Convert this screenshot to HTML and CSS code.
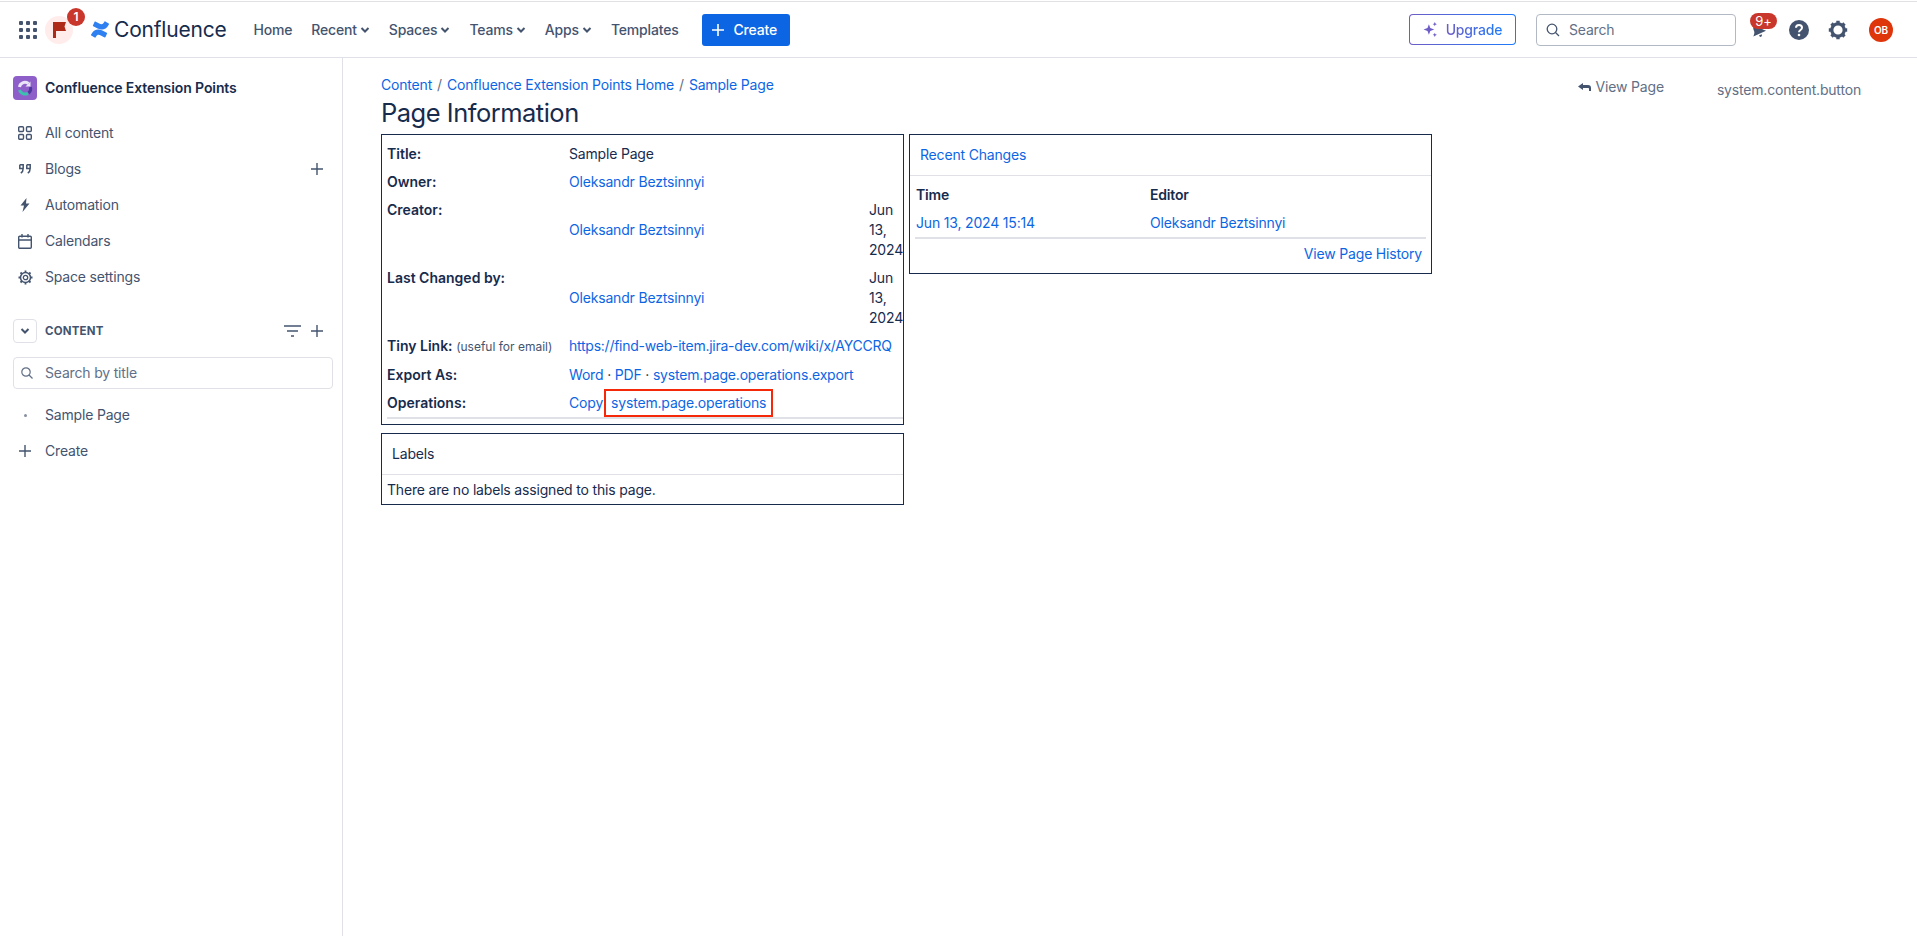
FILE: index.html
```html
<!DOCTYPE html>
<html>

<head>
    <meta charset="UTF-8">
    <link rel="stylesheet" href="styles.css">
    <title>Page Information</title>
</head>

<body>
    <div class="topBar">
        <svg class="waffle" width="18" height="18" viewBox="0 0 18 18" fill="#44546f">
            <rect x="0" y="0" width="4" height="4" rx="1" />
            <rect x="7" y="0" width="4" height="4" rx="1" />
            <rect x="14" y="0" width="4" height="4" rx="1" />
            <rect x="0" y="7" width="4" height="4" rx="1" />
            <rect x="7" y="7" width="4" height="4" rx="1" />
            <rect x="14" y="7" width="4" height="4" rx="1" />
            <rect x="0" y="14" width="4" height="4" rx="1" />
            <rect x="7" y="14" width="4" height="4" rx="1" />
            <rect x="14" y="14" width="4" height="4" rx="1" />
        </svg>
        <div class="flagWrapper">
            <svg width="13" height="16" viewBox="0 0 13 16">
                <path d="M0 0h13l-1.500 4.500L13 9H3v7H0z" fill="#ae2a19" />
            </svg>
            <div class="flagBadge">1</div>
        </div>
        <div class="logo">
            <svg width="18" height="17" viewBox="0 0 18 17" fill="#2f80f0">
                <path d="M.6 12.700c-.2.300-.4.700-.6 1-.1.300 0 .600.300.800l3.400 2.100c.3.200.600.100.800-.2.100-.2.300-.5.600-.9 1.300-2.200 2.700-1.900 5.200-.7l3.400 1.600c.3.100.6 0 .8-.3l1.600-3.700c.1-.3 0-.6-.3-.7-.7-.3-2.200-1-3.500-1.700C7.600 7.600 3.400 7.800.6 12.700z" />
                <path d="M17.400 4.300c.2-.3.400-.7.600-1 .1-.3 0-.6-.3-.8L14.300.4c-.3-.2-.6-.1-.8.2-.1.200-.3.500-.6.900-1.300 2.200-2.700 1.900-5.200.7L4.300.6c-.3-.1-.6 0-.8.300L1.900 4.600c-.1.300 0 .6.300.7.700.3 2.200 1 3.500 1.700 4.700 2.400 8.900 2.200 11.700-2.700z" />
            </svg>
            <span>Confluence</span>
        </div>
        <div class="navItem">Home</div>
        <div class="navItem">Recent<svg class="chevron" width="10" height="6" viewBox="0 0 10 6"><path d="M1.500 1L5 4.500 8.500 1" /></svg></div>
        <div class="navItem">Spaces<svg class="chevron" width="10" height="6" viewBox="0 0 10 6"><path d="M1.500 1L5 4.500 8.500 1" /></svg></div>
        <div class="navItem">Teams<svg class="chevron" width="10" height="6" viewBox="0 0 10 6"><path d="M1.500 1L5 4.500 8.500 1" /></svg></div>
        <div class="navItem">Apps<svg class="chevron" width="10" height="6" viewBox="0 0 10 6"><path d="M1.500 1L5 4.500 8.500 1" /></svg></div>
        <div class="navItem">Templates</div>
        <div class="createButton">
            <svg width="12" height="12" viewBox="0 0 12 12">
                <path d="M6 0v12M0 6h12" stroke="white" stroke-width="1.600" />
            </svg>
            <span>Create</span>
        </div>

        <div class="upgradeButton">
            <svg width="15" height="15" viewBox="0 0 14 14" fill="#6e5dc6">
                <path d="M5.500 2l1.300 3.700L10.500 7 6.800 8.300 5.500 12 4.200 8.300.5 7l3.700-1.300z" />
                <path d="M11 0l.6 1.400L13 2l-1.400.6L11 4l-.6-1.400L9 2l1.400-.6zM11 10l.6 1.400 1.400.6-1.400.6L11 14l-.6-1.400L9 12l1.400-.6z" />
            </svg>
            <span>Upgrade</span>
        </div>
        <div class="searchBox">
            <svg width="14" height="14" viewBox="0 0 14 14" fill="none" stroke="#44546f" stroke-width="1.300">
                <circle cx="6" cy="6" r="4.800" />
                <path d="M9.500 9.500L13 13" />
            </svg>
            <span>Search</span>
        </div>
        <div class="bellWrapper">
            <svg width="18" height="18" viewBox="0 0 18 18" fill="#44546f">
                <g transform="rotate(-25 9 9)">
                    <path d="M9 3c3 0 4 2.500 4 5 0 2 1 3 3 5H2c2-2 3-3 3-5 0-2.500 1-5 4-5zM7.500 14.500h3c0 1-.7 2-1.500 2s-1.500-1-1.500-2z" />
                </g>
            </svg>
            <div class="bellBadge">9+</div>
        </div>
        <svg class="helpIcon" width="20" height="20" viewBox="0 0 20 20">
            <circle cx="10" cy="10" r="10" fill="#44546f" />
            <path d="M7 7.800C7 6 8.300 5 10 5s3 1.100 3 2.700c0 2.300-3 2.300-3 4.500" fill="none" stroke="white" stroke-width="2" />
            <circle cx="10" cy="15" r="1.300" fill="white" />
        </svg>
        <svg class="gearIcon" width="20" height="20" viewBox="0 0 20 20">
            <circle cx="10" cy="10" r="6.200" fill="none" stroke="#44546f" stroke-width="3.200" />
            <path d="M10 .8v3M10 16.200v3M.8 10h3M16.200 10h3M3.500 3.500l2.100 2.100M14.400 14.400l2.100 2.100M3.500 16.500l2.100-2.100M14.400 5.600l2.100-2.100" stroke="#44546f" stroke-width="3.400" />
        </svg>
        <div class="avatar">OB</div>
    </div>

    <div class="wrapper">
        <div class="sidebar">
            <div class="spaceTitle">
                <svg width="24" height="24" viewBox="0 0 24 24">
                    <rect width="24" height="24" rx="4" fill="#8f5fc9" />
                    <path d="M6.500 14c1 3.500 5 5 8.500 3.500" fill="none" stroke="#3cc0b0" stroke-width="3" />
                    <path d="M6.500 11c.5-4 5-6 9-3.500" fill="none" stroke="#e9e4f7" stroke-width="3" />
                    <path d="M15.500 17c2-1.500 2.500-4 2-6" fill="none" stroke="#4b3a9c" stroke-width="3" />
                    <path d="M17.500 5.500v5h-5z" fill="#e9e4f7" />
                </svg>
                <span>Confluence Extension Points</span>
            </div>
            <div class="sideItem">
                <div class="sideIcon">
                    <svg width="14" height="14" viewBox="0 0 14 14" fill="none" stroke="#44546f" stroke-width="1.400">
                        <rect x=".7" y=".7" width="4.800" height="4.800" rx="1" />
                        <rect x="8.500" y=".7" width="4.800" height="4.800" rx="1" />
                        <rect x=".7" y="8.500" width="4.800" height="4.800" rx="1" />
                        <rect x="8.500" y="8.500" width="4.800" height="4.800" rx="1" />
                    </svg>
                </div>
                <span>All content</span>
            </div>
            <div class="sideItem">
                <div class="sideIcon">
                    <svg width="12" height="10" viewBox="0 0 12 10" fill="none" stroke="#44546f" stroke-width="1.500">
                        <path d="M.8 .8h3.400v3.400c0 2.400-.8 3.900-2.400 5M.8 .8v3.700h3.400M7.800 .8h3.400v3.400c0 2.400-.8 3.900-2.400 5M7.800 .8v3.700h3.400" />
                    </svg>
                </div>
                <span>Blogs</span>
                <svg class="sidePlus" width="12" height="12" viewBox="0 0 12 12">
                    <path d="M6 0v12M0 6h12" stroke="#44546f" stroke-width="1.400" />
                </svg>
            </div>
            <div class="sideItem">
                <div class="sideIcon">
                    <svg width="10" height="14" viewBox="0 0 10 14" fill="#44546f">
                        <path d="M6.500 0L.5 7.500H4L2.500 14 9.500 5.500H6z" />
                    </svg>
                </div>
                <span>Automation</span>
            </div>
            <div class="sideItem">
                <div class="sideIcon">
                    <svg width="14" height="15" viewBox="0 0 14 15" fill="none" stroke="#44546f" stroke-width="1.400">
                        <rect x=".7" y="2.200" width="12.600" height="12" rx="1" />
                        <path d="M.7 6h12.600M4 0v3.500M10 0v3.500" />
                    </svg>
                </div>
                <span>Calendars</span>
            </div>
            <div class="sideItem">
                <div class="sideIcon">
                    <svg width="15" height="15" viewBox="0 0 15 15" fill="none" stroke="#44546f">
                        <circle cx="7.500" cy="7.500" r="2.200" stroke-width="1.300" />
                        <circle cx="7.500" cy="7.500" r="5" stroke-width="1.500" />
                        <path d="M7.500 .5v2M7.500 12.500v2M.5 7.500h2M12.500 7.500h2M2.500 2.500L4 4M11 11l1.500 1.500M2.500 12.500L4 11M11 4l1.500-1.500" stroke-width="1.800" />
                    </svg>
                </div>
                <span>Space settings</span>
            </div>

            <div class="contentHeader">
                <div class="collapseButton">
                    <svg class="chevron" width="10" height="6" viewBox="0 0 10 6"><path d="M1.500 1L5 4.500 8.500 1" /></svg>
                </div>
                <span class="contentTitle">CONTENT</span>
                <svg class="filterIcon" width="17" height="12" viewBox="0 0 17 12" stroke="#44546f" stroke-width="1.400">
                    <path d="M0 1h17M3 6h11M7 11h3" />
                </svg>
                <svg class="contentPlus" width="12" height="12" viewBox="0 0 12 12">
                    <path d="M6 0v12M0 6h12" stroke="#44546f" stroke-width="1.400" />
                </svg>
            </div>
            <div class="titleSearch">
                <svg width="12" height="12" viewBox="0 0 12 12" fill="none" stroke="#626f86" stroke-width="1.200">
                    <circle cx="5" cy="5" r="4.200" />
                    <path d="M8 8l3.500 3.500" />
                </svg>
                <span>Search by title</span>
            </div>
            <div class="sideItem">
                <div class="sideIcon"><div class="dot"></div></div>
                <span>Sample Page</span>
            </div>
            <div class="sideItem">
                <div class="sideIcon">
                    <svg width="12" height="12" viewBox="0 0 12 12">
                        <path d="M6 0v12M0 6h12" stroke="#44546f" stroke-width="1.400" />
                    </svg>
                </div>
                <span>Create</span>
            </div>
        </div>

        <div class="main">
            <div class="pageHeader">
                <div>
                    <div class="breadcrumbs">
                        <a>Content</a><span>/</span><a>Confluence Extension Points Home</a><span>/</span><a>Sample Page</a>
                    </div>
                    <h1>Page Information</h1>
                </div>
                <div class="viewPage">
                    <svg width="13" height="9" viewBox="0 0 13 9" fill="#44546f">
                        <path d="M0 3.500L5 0v2h5c2 0 3 1 3 3v3h-2V6c0-.7-.3-1-1-1H5v2z" />
                    </svg>
                    <span>View Page</span>
                </div>
                <div class="contentButton">system.content.button</div>
            </div>

            <div class="columns">
                <div class="leftColumn">
                    <div class="box">
                        <table class="infoTable">
                            <colgroup>
                                <col class="labelCol">
                                <col class="valueCol">
                                <col class="dateCol">
                            </colgroup>
                            <tr>
                                <td class="label">Title:</td>
                                <td colspan="2">Sample Page</td>
                            </tr>
                            <tr>
                                <td class="label">Owner:</td>
                                <td colspan="2"><a>Oleksandr Beztsinnyi</a></td>
                            </tr>
                            <tr>
                                <td class="label">Creator:</td>
                                <td class="middle"><a>Oleksandr Beztsinnyi</a></td>
                                <td class="date">Jun 13, 2024</td>
                            </tr>
                            <tr>
                                <td class="label">Last Changed by:</td>
                                <td class="middle"><a>Oleksandr Beztsinnyi</a></td>
                                <td class="date">Jun 13, 2024</td>
                            </tr>
                            <tr>
                                <td class="label">Tiny Link: <small>(useful for email)</small></td>
                                <td colspan="2"><a class="tinyUrl">https://find-web-item.jira-dev.com/wiki/x/AYCCRQ</a></td>
                            </tr>
                            <tr>
                                <td class="label">Export As:</td>
                                <td colspan="2"><a>Word</a> · <a>PDF</a> · <a>system.page.operations.export</a></td>
                            </tr>
                            <tr>
                                <td class="label">Operations:</td>
                                <td colspan="2"><a>Copy</a><a class="highlighted">system.page.operations</a></td>
                            </tr>
                        </table>
                        <div class="infoEnd"></div>
                    </div>
                    <div class="box labelsBox">
                        <div class="boxTitle">Labels</div>
                        <div class="noLabels">There are no labels assigned to this page.</div>
                    </div>
                </div>
                <div class="box rightBox">
                    <div class="boxTitle"><a>Recent Changes</a></div>
                    <table class="changesTable">
                        <colgroup>
                            <col class="timeCol">
                            <col>
                        </colgroup>
                        <tr>
                            <th>Time</th>
                            <th>Editor</th>
                        </tr>
                        <tr>
                            <td><a>Jun 13, 2024 15:14</a></td>
                            <td><a>Oleksandr Beztsinnyi</a></td>
                        </tr>
                    </table>
                    <div class="historyLink"><a>View Page History</a></div>
                </div>
            </div>
        </div>
    </div>
</body>

</html>
```
FILE: styles.css
```css
html,
body {
    margin: 0;
    height: 100%;
}

body {
    font-family: Inter, "Liberation Sans", sans-serif;
    font-size: 14px;
    line-height: 20px;
    letter-spacing: -0.18px;
    color: #172b4d;
    background: white;
    overflow: hidden;
}

a {
    color: #0c66e4;
}

.topBar {
    height: 55px;
    margin-top: 1px;
    border-top: solid 1px #e0e1e4;
    border-bottom: solid 1px #dfe1e6;
    display: flex;
    align-items: center;
    padding: 0 24px 0 19px;
}

.waffle {
    flex: none;
}

.flagWrapper {
    position: relative;
    width: 28px;
    height: 28px;
    margin-left: 8px;
    border-radius: 50%;
    background: #ffeceb;
    display: flex;
    align-items: center;
    justify-content: center;
}

.flagBadge {
    position: absolute;
    top: -8px;
    right: -12px;
    width: 18px;
    height: 18px;
    border-radius: 50%;
    background: #c9372c;
    color: white;
    font-size: 12px;
    line-height: 18px;
    font-weight: 600;
    text-align: center;
}

.logo {
    display: flex;
    align-items: center;
    gap: 5px;
    margin-left: 18px;
    margin-right: 27px;
    font-size: 21px;
    letter-spacing: -0.2px;
    color: #172b4d;
}

.navItem {
    display: flex;
    align-items: center;
    gap: 3px;
    color: #44546f;
    font-weight: 500;
    font-size: 14px;
    margin-right: 19px;
}

.chevron {
    fill: none;
    stroke: #44546f;
    stroke-width: 2;
}

.createButton {
    display: flex;
    align-items: center;
    gap: 10px;
    width: 88px;
    height: 32px;
    box-sizing: border-box;
    padding-left: 10px;
    margin-left: 4px;
    background: #0c66e4;
    color: white;
    font-weight: 500;
    border-radius: 3px;
}

.upgradeButton {
    display: flex;
    align-items: center;
    justify-content: center;
    gap: 8px;
    width: 107px;
    height: 31px;
    box-sizing: border-box;
    margin-left: auto;
    border: solid 1px transparent;
    border-radius: 4px;
    background: linear-gradient(white, white) padding-box, linear-gradient(90deg, #6e5dc6, #1d7afc) border-box;
    font-weight: 500;
}

.upgradeButton span {
    background: linear-gradient(90deg, #6e5dc6, #1d7afc);
    -webkit-background-clip: text;
    background-clip: text;
    color: transparent;
}

.searchBox {
    display: flex;
    align-items: center;
    gap: 9px;
    width: 200px;
    height: 32px;
    box-sizing: border-box;
    margin-left: 20px;
    padding-left: 9px;
    border: solid 1px #b3b9c4;
    border-radius: 4px;
    color: #626f86;
}

.bellWrapper {
    position: relative;
    width: 18px;
    height: 18px;
    margin-left: 13px;
}

.bellBadge {
    position: absolute;
    top: -8px;
    left: 1px;
    width: 27px;
    height: 16px;
    border-radius: 8px;
    background: #c9372c;
    color: white;
    font-size: 13px;
    line-height: 16px;
    text-align: center;
}

.helpIcon {
    margin-left: 22px;
}

.gearIcon {
    margin-left: 19px;
}

.avatar {
    width: 24px;
    height: 24px;
    margin-left: 21px;
    border-radius: 50%;
    background: #de350b;
    color: white;
    font-size: 10px;
    line-height: 24px;
    font-weight: 600;
    text-align: center;
}

.wrapper {
    display: flex;
    height: calc(100vh - 58px);
}

.sidebar {
    flex: none;
    width: 343px;
    box-sizing: border-box;
    border-right: solid 1px #dfe1e6;
    padding: 18px 9px 0 13px;
    color: #44546f;
}

.spaceTitle {
    display: flex;
    align-items: center;
    gap: 8px;
    height: 24px;
    margin-bottom: 15px;
    font-weight: 600;
    letter-spacing: -0.1px;
    color: #172b4d;
}

.sideItem {
    display: flex;
    align-items: center;
    height: 36px;
}

.sideIcon {
    width: 24px;
    margin-right: 8px;
    display: flex;
    align-items: center;
    justify-content: center;
}

.sidePlus {
    margin-left: auto;
    margin-right: 10px;
}

.dot {
    width: 3px;
    height: 3px;
    border-radius: 50%;
    background: #8590a2;
}

.contentHeader {
    display: flex;
    align-items: center;
    margin-top: 24px;
    height: 24px;
}

.collapseButton {
    width: 24px;
    height: 24px;
    box-sizing: border-box;
    margin-right: 8px;
    border: solid 1px #dfe1e6;
    border-radius: 4px;
    display: flex;
    align-items: center;
    justify-content: center;
}

.contentTitle {
    font-size: 11.500px;
    font-weight: 700;
    letter-spacing: 0.2px;
}

.filterIcon {
    margin-left: auto;
    margin-right: 10px;
}

.contentPlus {
    margin-right: 10px;
}

.titleSearch {
    display: flex;
    align-items: center;
    gap: 12px;
    height: 32px;
    box-sizing: border-box;
    margin-top: 14px;
    margin-bottom: 8px;
    padding-left: 7px;
    border: solid 1px #dfe1e6;
    border-radius: 4px;
    color: #626f86;
}

.main {
    flex: 1;
    padding: 0 0 0 38px;
}

.pageHeader {
    display: flex;
    align-items: flex-start;
    height: 76px;
}

.breadcrumbs {
    display: flex;
    gap: 5px;
    margin-top: 17px;
}

.breadcrumbs span {
    color: #626f86;
}

h1 {
    margin: 2px 0 0;
    font-size: 25.500px;
    line-height: 32px;
    font-weight: 400;
    letter-spacing: -0.5px;
}

.viewPage {
    display: flex;
    align-items: center;
    gap: 5px;
    margin-left: auto;
    margin-top: 19px;
    color: #626f86;
}

.contentButton {
    margin-top: 22px;
    margin-left: 53px;
    margin-right: 56px;
    color: #626f86;
}

.columns {
    display: flex;
    align-items: flex-start;
    gap: 5px;
}

.leftColumn {
    width: 523px;
}

.box {
    border: solid 1px #172b4d;
    box-sizing: border-box;
}

.infoTable {
    border-collapse: collapse;
    margin-top: 5px;
    table-layout: fixed;
    width: 521px;
}

.labelCol {
    width: 183px;
}

.valueCol {
    width: 300px;
}

.infoTable td {
    padding: 4px;
    vertical-align: top;
}

.infoTable td.label {
    padding-left: 5px;
    font-weight: 600;
    letter-spacing: 0;
    white-space: nowrap;
}

.infoTable td.middle {
    vertical-align: middle;
}

.infoTable td.date {
    padding-right: 0;
}

.infoTable small {
    font-size: 12px;
    font-weight: 400;
    color: #44546f;
}

.tinyUrl {
    letter-spacing: -0.25px;
}

.highlighted {
    display: inline-block;
    margin: -4px 0 -4px 1px;
    padding: 0 5px;
    border: solid 2px #f5290a;
    line-height: 24px;
}

.infoEnd {
    height: 2px;
    margin: 0 0 5px 5px;
    background: #dfe1e6;
}

.labelsBox {
    margin-top: 8px;
    height: 72px;
}

.boxTitle {
    padding: 0 10px;
    height: 40px;
    line-height: 40px;
    border-bottom: solid 1px #dfe1e6;
}

.noLabels {
    padding: 5px;
}

.rightBox {
    width: 523px;
    height: 140px;
}

.changesTable {
    border-collapse: collapse;
    table-layout: fixed;
    margin: 9px 5px 0;
    width: 511px;
    border-bottom: solid 2px #dfe1e6;
}

.timeCol {
    width: 234px;
}

.changesTable th {
    padding: 0 0 8px 1px;
    text-align: left;
    font-weight: 600;
}

.changesTable td {
    padding: 0 0 4px 1px;
}

.historyLink {
    text-align: right;
    padding: 5px 9px 0 0;
}
```
